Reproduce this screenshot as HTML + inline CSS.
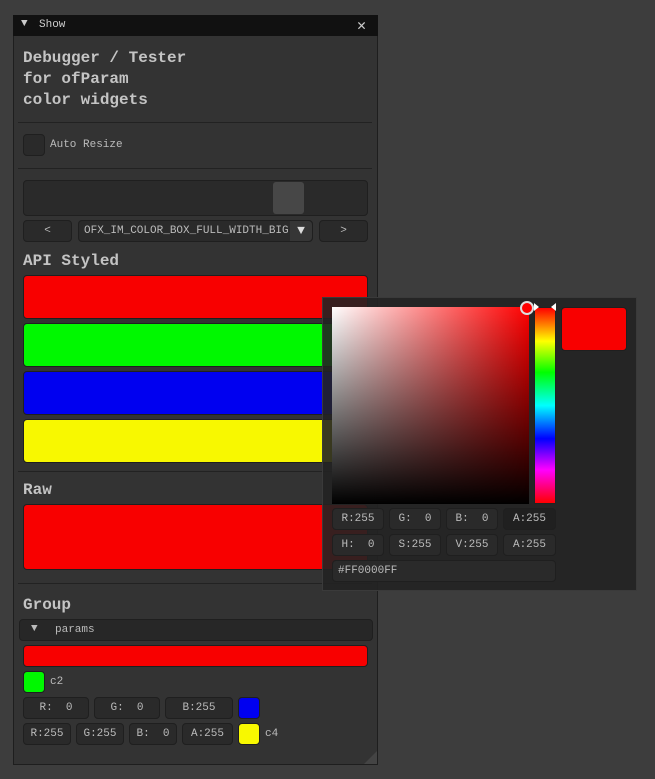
<!DOCTYPE html>
<html><head><meta charset="utf-8"><style>
*{box-sizing:border-box;margin:0;padding:0}
body{width:655px;height:779px;background:#3d3d3d;position:relative;overflow:hidden;font-family:"Liberation Mono","DejaVu Sans Mono",monospace;color:#c8c8c8}
.a{position:absolute;white-space:pre}
.win{left:13px;top:15px;width:365px;height:750px;background:#333;border:1px solid #1e1e1e}
.title{left:13px;top:15px;width:365px;height:21px;background:#111;font-size:11px;color:#ccc}
.h{font-size:16px;font-weight:bold;color:#c4c4c4}
.sep{height:1px;background:#222;left:18px;width:354px}
.fr{background:#2a2a2a;border:1px solid #1f1f1f;border-radius:4px;font-size:11px;color:#bbb;text-align:center}
.sw{border-radius:4px;border:1px solid #1f1f1f}
.pop{left:322px;top:297px;width:315px;height:294px;background:rgba(34,34,34,0.9);border:1px solid #3a3a3a}
.pf{background:#2a2a2a;border:1px solid #1f1f1f;border-radius:4px;font-size:11px;color:#bbb;text-align:center;line-height:20px;height:22px}
</style></head><body>
<div class="a win"></div>
<div class="a title"><span class="a" style="left:8px;top:3px;font-size:11px">▼</span><span class="a" style="left:26px;top:4px">Show</span><span class="a" style="left:344px;top:1px;font-size:15px">✕</span></div>
<div class="a h" style="left:23px;top:48px;line-height:21px">Debugger / Tester
for ofParam
color widgets</div>
<div class="a sep" style="top:122px"></div>
<div class="a fr" style="left:23px;top:134px;width:22px;height:22px"></div>
<div class="a" style="left:50px;top:139px;font-size:11px;color:#bbb">Auto Resize</div>
<div class="a sep" style="top:168px"></div>
<div class="a fr" style="left:23px;top:180px;width:345px;height:36px"></div>
<div class="a" style="left:273px;top:182px;width:31px;height:32px;background:#474747;border-radius:3px"></div>
<div class="a fr" style="left:23px;top:220px;width:49px;height:22px;line-height:20px">&lt;</div>
<div class="a fr" style="left:78px;top:220px;width:235px;height:22px;line-height:20px;text-align:left;padding-left:5px">OFX_IM_COLOR_BOX_FULL_WIDTH_BIG</div>
<div class="a" style="left:290px;top:221px;width:22px;height:20px;background:#363636;border-radius:0 4px 4px 0;text-align:center;font-size:13px;line-height:20px;color:#ddd">▼</div>
<div class="a fr" style="left:319px;top:220px;width:49px;height:22px;line-height:20px">&gt;</div>
<div class="a h" style="left:23px;top:252px">API Styled</div>
<div class="a sw" style="left:23px;top:275px;width:345px;height:44px;background:#f80000"></div>
<div class="a sw" style="left:23px;top:323px;width:345px;height:44px;background:#00f800"></div>
<div class="a sw" style="left:23px;top:371px;width:345px;height:44px;background:#0000f0"></div>
<div class="a sw" style="left:23px;top:419px;width:345px;height:44px;background:#f8f800"></div>
<div class="a sep" style="top:471px"></div>
<div class="a h" style="left:23px;top:481px">Raw</div>
<div class="a sw" style="left:23px;top:504px;width:345px;height:66px;background:#f80000"></div>
<div class="a sep" style="top:583px"></div>
<div class="a h" style="left:23px;top:596px">Group</div>
<div class="a fr" style="left:19px;top:619px;width:354px;height:22px;background:#272727;text-align:left"><span class="a" style="left:11px;top:3px;font-size:11px">▼</span><span class="a" style="left:35px;top:4px">params</span></div>
<div class="a sw" style="left:23px;top:645px;width:345px;height:22px;background:#f80000"></div>
<div class="a sw" style="left:23px;top:671px;width:22px;height:22px;background:#00f800"></div>
<div class="a" style="left:50px;top:676px;font-size:11px;color:#bbb">c2</div>
<div class="a pf" style="left:23px;top:697px;width:66px">R:  0</div>
<div class="a pf" style="left:94px;top:697px;width:66px">G:  0</div>
<div class="a pf" style="left:165px;top:697px;width:68px">B:255</div>
<div class="a sw" style="left:238px;top:697px;width:22px;height:22px;background:#0000f0"></div>
<div class="a pf" style="left:23px;top:723px;width:48px">R:255</div>
<div class="a pf" style="left:76px;top:723px;width:48px">G:255</div>
<div class="a pf" style="left:129px;top:723px;width:48px">B:  0</div>
<div class="a pf" style="left:182px;top:723px;width:51px">A:255</div>
<div class="a sw" style="left:238px;top:723px;width:22px;height:22px;background:#f8f800"></div>
<div class="a" style="left:265px;top:728px;font-size:11px;color:#bbb">c4</div>
<div class="a" style="left:364px;top:751px;width:0;height:0;border-left:13px solid transparent;border-bottom:13px solid #444"></div>

<div class="a pop"></div>
<div class="a" style="left:332px;top:307px;width:197px;height:197px;background:linear-gradient(to bottom,rgba(0,0,0,0),#000),linear-gradient(to right,#fff,#f00)"></div>
<div class="a" style="left:520px;top:301px;width:14px;height:14px;border-radius:50%;background:#f00;border:2px solid #ddd"></div>
<div class="a" style="left:534px;top:307px;width:22px;height:197px;border:1px solid #222;background:linear-gradient(#f00,#ff0 17%,#0f0 33%,#0ff 50%,#00f 67%,#f0f 83%,#f00)"></div>
<div class="a" style="left:534px;top:303px;width:0;height:0;border-top:4px solid transparent;border-bottom:4px solid transparent;border-left:5px solid #fff"></div>
<div class="a" style="left:551px;top:303px;width:0;height:0;border-top:4px solid transparent;border-bottom:4px solid transparent;border-right:5px solid #fff"></div>
<div class="a sw" style="left:561px;top:307px;width:66px;height:44px;background:#f80000"></div>
<div class="a pf" style="left:332px;top:508px;width:52px">R:255</div>
<div class="a pf" style="left:389px;top:508px;width:52px">G:  0</div>
<div class="a pf" style="left:446px;top:508px;width:52px">B:  0</div>
<div class="a pf" style="left:503px;top:508px;width:53px;background:#202020">A:255</div>
<div class="a pf" style="left:332px;top:534px;width:52px">H:  0</div>
<div class="a pf" style="left:389px;top:534px;width:52px">S:255</div>
<div class="a pf" style="left:446px;top:534px;width:52px">V:255</div>
<div class="a pf" style="left:503px;top:534px;width:53px">A:255</div>
<div class="a pf" style="left:332px;top:560px;width:224px;text-align:left;padding-left:5px">#FF0000FF</div>
</body></html>
